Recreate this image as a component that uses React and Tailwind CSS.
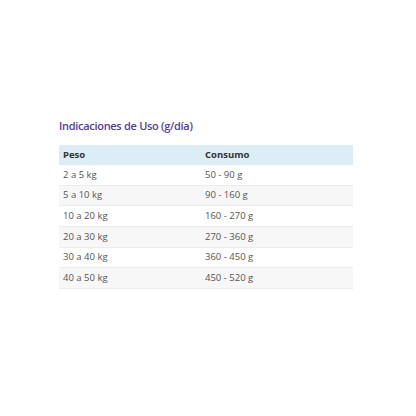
import React from 'react';

const filas = [
  ['2 a 5 kg', '50 - 90 g'],
  ['5 a 10 kg', '90 - 160 g'],
  ['10 a 20 kg', '160 - 270 g'],
  ['20 a 30 kg', '270 - 360 g'],
  ['30 a 40 kg', '360 - 450 g'],
  ['40 a 50 kg', '450 - 520 g'],
];

export default function App() {
  return (
    <div className="w-[416px] h-[416px] bg-white pt-[117px] pl-[59px] font-['Open_Sans',sans-serif]">
      <h2 className="text-[11px] leading-[18px] font-semibold text-[#573d9b] tracking-[-0.3px]">
        Indicaciones de Uso (g/día)
      </h2>
      <div className="mt-[10px] w-[294px] text-[9.5px] text-[#555]">
        <div className="grid grid-cols-[142px_1fr] h-[20px] items-center bg-[#dcedf6] font-bold text-[#333]">
          <span className="pl-[4px]">Peso</span>
          <span className="pl-[4px]">Consumo</span>
        </div>
        {filas.map(([peso, consumo], i) => (
          <div key={i}
            className={`grid grid-cols-[142px_1fr] h-[20.67px] items-center border-b border-[#ececec] ${i % 2 ? 'bg-[#f7f7f7]' : 'bg-white'}`}>
            <span className="pl-[4px]">{peso}</span>
            <span className="pl-[4px]">{consumo}</span>
          </div>
        ))}
      </div>
    </div>
  );
}
